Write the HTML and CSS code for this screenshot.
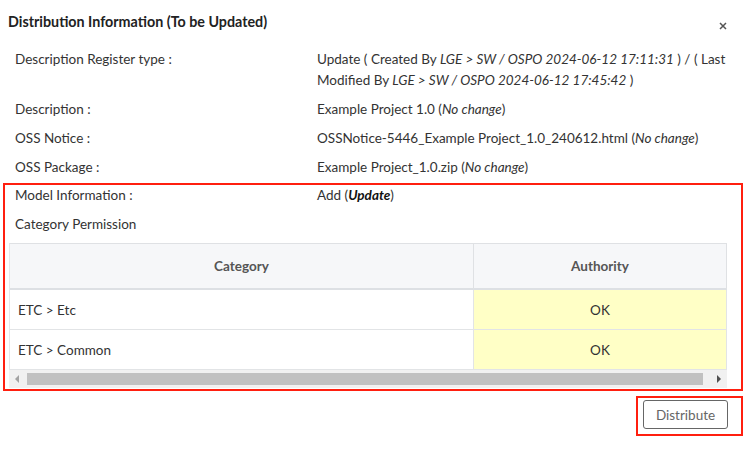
FILE: index.html
```html
<!DOCTYPE html>
<html>
<head>
<meta charset="utf-8">
<link rel="stylesheet" href="styles.css">
</head>
<body>
<div class="modal">
  <div class="modal-header">
    <h1 class="title">Distribution Information (To be Updated)</h1>
    <svg class="close" width="8" height="8" viewBox="0 0 8 8"><path d="M1 1L7 7M7 1L1 7" stroke="#555" stroke-width="1.5" fill="none"/></svg>
  </div>
  <div class="info">
    <div class="row">
      <div class="label">Description Register type :</div>
      <div class="value">Update ( Created By <i>LGE &gt; SW / OSPO 2024-06-12 17:11:31</i> ) / ( Last Modified By <i>LGE &gt; SW / OSPO 2024-06-12 17:45:42</i> )</div>
    </div>
    <div class="row">
      <div class="label">Description :</div>
      <div class="value">Example Project 1.0 (<i>No change</i>)</div>
    </div>
    <div class="row">
      <div class="label">OSS Notice :</div>
      <div class="value">OSSNotice-5446_Example Project_1.0_240612.html (<i>No change</i>)</div>
    </div>
    <div class="row">
      <div class="label">OSS Package :</div>
      <div class="value">Example Project_1.0.zip (<i>No change</i>)</div>
    </div>
  </div>
  <div class="highlight">
    <div class="row row-first">
      <div class="label">Model Information :</div>
      <div class="value">Add (<b><i>Update</i></b>)</div>
    </div>
    <div class="row">
      <div class="label">Category Permission</div>
    </div>
    <div class="table-wrap">
      <div class="grid">
        <div class="th">Category</div>
        <div class="th">Authority</div>
        <div class="td">ETC &gt; Etc</div>
        <div class="td ok">OK</div>
        <div class="td">ETC &gt; Common</div>
        <div class="td ok">OK</div>
      </div>
      <div class="hscroll">
        <span class="arrow arrow-left"></span>
        <span class="thumb"></span>
        <span class="arrow arrow-right"></span>
      </div>
    </div>
  </div>
  <div class="footer">
    <div class="btn-frame">
      <button class="btn">Distribute</button>
    </div>
  </div>
</div>
</body>
</html>
```

FILE: styles.css
```css
* { box-sizing: border-box; }
html, body { margin: 0; padding: 0; background: #fff; }
body {
  font-family: Lato, "Noto Sans", sans-serif;
  font-size: 13.5px;
  color: #333;
  width: 756px;
  height: 458px;
  overflow: hidden;
}
.modal { padding: 12px 13px 0 0; }
.modal-header {
  display: flex;
  justify-content: space-between;
  align-items: center;
  height: 20px;
  padding-left: 8px;
  padding-right: 16px;
}
.title {
  margin: 0;
  font-size: 14.3px;
  font-weight: 700;
  color: #222;
  line-height: 20px;
}
.close { display: block; margin-top: 8px; }
.info { margin-top: 13px; }
.row {
  display: flex;
  padding: 4px 0 4px 15px;
  line-height: 21px;
}
.label { width: 302px; flex: none; }
.value { flex: 1; padding-right: 4px; }
.value i { font-style: italic; }
.value b { color: #111; }
.highlight {
  margin: 1px 0 0 3px;
  border: 2px solid #ff1f0f;
  padding: 0 14px 1px 4px;
}
.highlight .row { padding-left: 6px; }
.highlight .row-first { padding-top: 0; }
.table-wrap { margin-top: 4px; }
.grid {
  display: grid;
  grid-template-columns: 464px 1fr;
  border-top: 1px solid #dfe1e4;
  border-left: 1px solid #e4e6e8;
}
.th {
  background: #f6f7f9;
  height: 46px;
  display: flex;
  align-items: center;
  justify-content: center;
  font-weight: 700;
  color: #555;
  border-right: 1px solid #dfe1e4;
  border-bottom: 2px solid #dde0e4;
}
.td {
  height: 40px;
  display: flex;
  align-items: center;
  padding-left: 8px;
  border-right: 1px solid #e2e4e6;
  border-bottom: 1px solid #e2e4e6;
  color: #333;
}
.td.ok {
  background: #ffffc6;
  justify-content: center;
  padding-left: 0;
}
.hscroll {
  display: flex;
  align-items: center;
  height: 18px;
  background: #f1f1f1;
  padding: 0 4px;
  gap: 6px;
}
.thumb {
  flex: 1;
  height: 12px;
  background: #c1c1c1;
  margin-right: 6px;
}
.arrow {
  width: 0;
  height: 0;
  border-top: 4px solid transparent;
  border-bottom: 4px solid transparent;
  margin: 0 2px;
}
.arrow-left { border-right: 4px solid #a3a3a3; }
.arrow-right { border-left: 4px solid #505050; }
.footer {
  display: flex;
  justify-content: flex-end;
  margin-top: 5px;
}
.btn-frame {
  border: 2px solid #ff1f0f;
  padding: 2px 13px 5px 5px;
}
.btn {
  display: block;
  width: 85px;
  height: 29px;
  background: #fff;
  border: 1px solid #666;
  border-radius: 3px;
  font-family: inherit;
  font-size: 13.5px;
  color: #666;
  padding: 0;
}
```
